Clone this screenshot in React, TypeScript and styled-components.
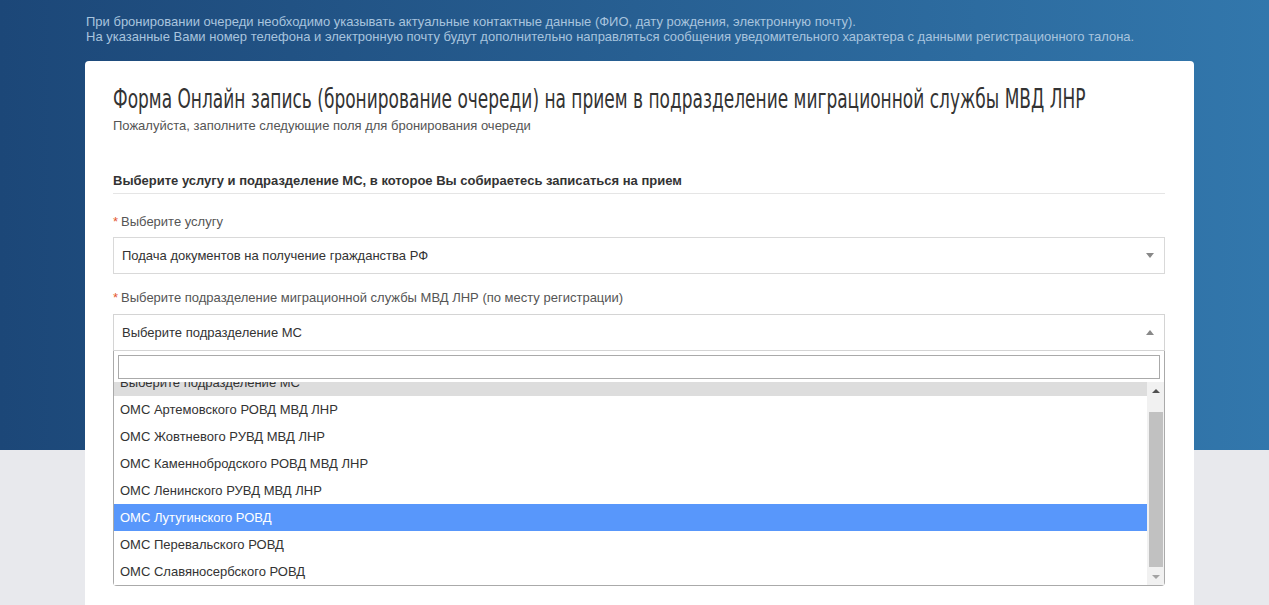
import styled, { createGlobalStyle } from "styled-components";

const GlobalStyle = createGlobalStyle`
  html, body {
    margin: 0;
    padding: 0;
    overflow: hidden;
  }
  body {
    font-family: "Liberation Sans", Arial, sans-serif;
    font-size: 13px;
    color: #333;
  }
`;

const Page = styled.div`
  min-height: 605px;
  background: linear-gradient(to right, #1c4778, #3277ac) top left / 100% 450px no-repeat, #e8e9ed;
  padding-top: 14px;
`;

const Notice = styled.div`
  margin-left: 86px;
  color: #a8c4de;
  font-size: 13px;
  line-height: 15px;
`;

const Card = styled.div`
  margin: 17px 0 0 85px;
  width: 1109px;
  box-sizing: border-box;
  background: #fff;
  border-radius: 4px;
  padding: 20px 29px 60px 28px;
`;

// no condensed face installed, so the regular one is narrowed
const Title = styled.h1`
  margin: 0;
  font-family: "DejaVu Sans", sans-serif;
  font-weight: normal;
  font-size: 26px;
  line-height: 36px;
  white-space: nowrap;
  overflow: hidden;
  color: #333;
  span {
    display: inline-block;
    transform: scaleX(0.654);
    transform-origin: left center;
  }
`;

const Subtitle = styled.p`
  margin: 0;
  color: #555;
  line-height: 18px;
`;

const Section = styled.h2`
  margin: 37px 0 0;
  font-size: 13px;
  font-weight: bold;
  line-height: 18px;
  color: #333;
  padding-bottom: 3px;
  border-bottom: 1px solid #e5e5e5;
`;

const Label = styled.label<{ $first?: boolean }>`
  display: block;
  color: #555;
  line-height: 18px;
  margin: ${(p) => (p.$first ? "19px" : "15px")} 0 ${(p) => (p.$first ? "6px" : "7px")};
`;

const Star = styled.span`
  color: #e4572e;
  margin-right: 3px;
`;

const SelectBox = styled.div<{ $open?: boolean }>`
  height: 37px;
  box-sizing: border-box;
  border: 1px solid ${(p) => (p.$open ? "#d4d4d4" : "#d9d9d9")};
  display: flex;
  align-items: center;
  justify-content: space-between;
  padding: 0 8px;
  color: #333;
`;

const Arrow = styled.span<{ $up?: boolean }>`
  width: 0;
  height: 0;
  border-left: 4px solid transparent;
  border-right: 4px solid transparent;
  ${(p) =>
    p.$up ? "border-bottom: 5px solid #888;" : "border-top: 5px solid #888;"}
  margin-right: 2px;
`;

const Dropdown = styled.div`
  border: 1px solid #aaa;
  border-top: none;
  border-radius: 0 0 4px 4px;
  background: #fff;
`;

const SearchWrap = styled.div`
  padding: 4px 4px 3px;
`;

const Search = styled.input`
  display: block;
  width: 100%;
  box-sizing: border-box;
  height: 24px;
  border: 1px solid #aaa;
  outline: none;
`;

const ListArea = styled.div`
  display: flex;
  height: 203px;
`;

const Results = styled.ul`
  flex: 1;
  list-style: none;
  margin: 0;
  padding: 0;
  overflow: hidden;
`;

const Option = styled.li<{ $state?: "selected" | "hover" }>`
  height: 27px;
  line-height: 27px;
  padding: 0 6px;
  color: ${(p) => (p.$state === "hover" ? "#fff" : "#333")};
  background: ${(p) =>
    p.$state === "hover" ? "#5897fb" : p.$state === "selected" ? "#ddd" : "#fff"};
  &:first-child {
    margin-top: -13px;
  }
`;

const Scrollbar = styled.div`
  width: 17px;
  background: #f1f1f1;
  display: flex;
  flex-direction: column;
  align-items: center;
`;

const ScrollBtn = styled.div`
  height: 17px;
  width: 100%;
  display: flex;
  align-items: center;
  justify-content: center;
`;

const Thumb = styled.div`
  width: 14px;
  height: 155px;
  margin-top: 13px;
  background: #c1c1c1;
`;

const Fill = styled.div`
  flex: 1;
`;

const TinyArrow = styled.span<{ $up?: boolean }>`
  width: 0;
  height: 0;
  border-left: 4px solid transparent;
  border-right: 4px solid transparent;
  ${(p) =>
    p.$up ? "border-bottom: 4px solid #505050;" : "border-top: 4px solid #a3a3a3;"}
`;

const options = [
  "Выберите подразделение МС",
  "ОМС Артемовского РОВД МВД ЛНР",
  "ОМС Жовтневого РУВД МВД ЛНР",
  "ОМС Каменнобродского РОВД МВД ЛНР",
  "ОМС Ленинского РУВД МВД ЛНР",
  "ОМС Лутугинского РОВД",
  "ОМС Перевальского РОВД",
  "ОМС Славяносербского РОВД",
];

export default function App() {
  return (
    <Page>
      <GlobalStyle />
      <Notice>
        При бронировании очереди необходимо указывать актуальные контактные данные (ФИО, дату рождения, электронную почту).
        <br />
        На указанные Вами номер телефона и электронную почту будут дополнительно направляться сообщения уведомительного характера с данными регистрационного талона.
      </Notice>
      <Card>
        <Title>
          <span>
            Форма Онлайн запись (бронирование очереди) на прием в подразделение миграционной службы МВД ЛНР
          </span>
        </Title>
        <Subtitle>Пожалуйста, заполните следующие поля для бронирования очереди</Subtitle>
        <Section>Выберите услугу и подразделение МС, в которое Вы собираетесь записаться на прием</Section>

        <Label $first>
          <Star>*</Star>Выберите услугу
        </Label>
        <SelectBox>
          <span>Подача документов на получение гражданства РФ</span>
          <Arrow />
        </SelectBox>

        <Label>
          <Star>*</Star>Выберите подразделение миграционной службы МВД ЛНР (по месту регистрации)
        </Label>
        <SelectBox $open>
          <span>Выберите подразделение МС</span>
          <Arrow $up />
        </SelectBox>
        <Dropdown>
          <SearchWrap>
            <Search />
          </SearchWrap>
          <ListArea>
            <Results>
              {options.map((o, i) => (
                <Option key={o} $state={i === 0 ? "selected" : i === 5 ? "hover" : undefined}>
                  {o}
                </Option>
              ))}
            </Results>
            <Scrollbar>
              <ScrollBtn>
                <TinyArrow $up />
              </ScrollBtn>
              <Thumb />
              <Fill />
              <ScrollBtn>
                <TinyArrow />
              </ScrollBtn>
            </Scrollbar>
          </ListArea>
        </Dropdown>
      </Card>
    </Page>
  );
}
